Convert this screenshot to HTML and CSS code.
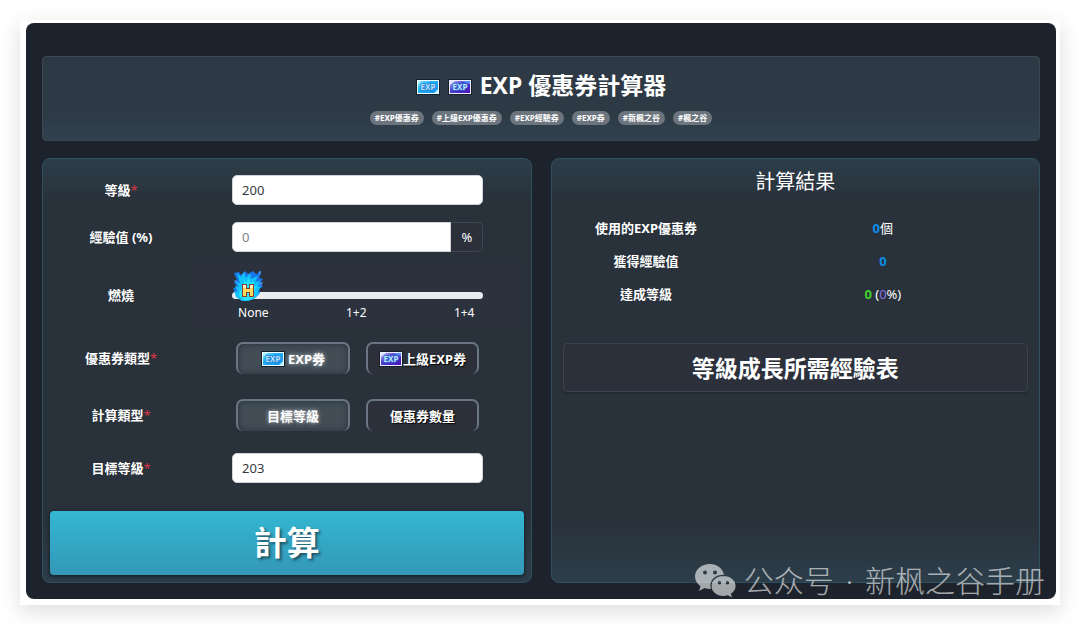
FILE: index.html
```html
<!DOCTYPE html>
<html lang="zh-Hant">
<head>
  <meta charset="UTF-8" />
  <meta name="viewport" content="width=device-width, initial-scale=1.0"/>
  <title>EXP 優惠券計算器</title>
  <link rel="stylesheet" href="styles.css">
</head>
<body>
  <div class="page">
    <header>
      <h1>
        <svg class="coupon" viewBox="0 0 24 16" aria-hidden="true">
          <defs>
            <linearGradient id="blueFill" x1="0" y1="0" x2="1" y2="1">
              <stop offset="0" stop-color="#8be9ff"/>
              <stop offset="0.35" stop-color="#1fb4f8"/>
              <stop offset="1" stop-color="#168be8"/>
            </linearGradient>
          </defs>
          <rect width="24" height="16" fill="#14202b"/>
          <rect x="1" y="1" width="22" height="14" fill="#f4fbff"/>
          <rect x="2" y="2" width="20" height="12" fill="url(#blueFill)"/>
          <path d="M2 2h4l-4 4zM18 14l4-4v4z" fill="#a5f1ff"/>
          <text x="12" y="11" text-anchor="middle" class="coupon-text">EXP</text>
        </svg>
        <svg class="coupon" viewBox="0 0 24 16" aria-hidden="true">
          <defs>
            <linearGradient id="purpleFill" x1="0" y1="0" x2="1" y2="1">
              <stop offset="0" stop-color="#c3b8f5"/>
              <stop offset="0.4" stop-color="#4a42cf"/>
              <stop offset="1" stop-color="#4a12b8"/>
            </linearGradient>
          </defs>
          <rect width="24" height="16" fill="#14202b"/>
          <rect x="1" y="1" width="22" height="14" fill="#f0ecff"/>
          <rect x="2" y="2" width="20" height="12" fill="url(#purpleFill)"/>
          <path d="M2 2h5l-5 4zM19 2h3v3z" fill="#d9e3ff"/>
          <path d="M14 2h8v3l-4-1z" fill="#4f8df0"/>
          <text x="12" y="11" text-anchor="middle" class="coupon-text">EXP</text>
        </svg>
        <span>EXP 優惠券計算器</span>
      </h1>
      <ul class="tags">
        <li>#EXP優惠券</li>
        <li>#上級EXP優惠券</li>
        <li>#EXP經驗券</li>
        <li>#EXP券</li>
        <li>#新楓之谷</li>
        <li>#楓之谷</li>
      </ul>
    </header>

    <main>
      <form class="card form-card">
        <div class="row">
          <label for="level">等級<span class="required">*</span></label>
          <div class="field"><input class="text-input" type="text" id="level" value="200"></div>
        </div>
        <div class="row">
          <label for="exp">經驗值 (%)</label>
          <div class="field input-group">
            <input class="text-input" type="text" id="exp" placeholder="0">
            <span class="unit">%</span>
          </div>
        </div>
        <div class="row row-burning">
          <label for="burning">燃燒</label>
          <div class="field burning">
            <div class="slider">
              <input type="range" id="burning" min="0" max="2" value="0">
              <svg class="flame" viewBox="0 0 32 32" aria-hidden="true">
                <path d="M2 3l5-1 2 3 4-4 3 3 5-3 3 3 5-1-2 5 4 1-3 4 3 4-4 1 1 5-5 5H9l-5-4-3-6 4-1-3-5 3-2z" fill="#1878e8"/>
                <path d="M5 3l4 4 3-5 2 6 4-5 1 6 7-3-3 6 5-1-2 5 3 1-3 4 1 3-5 5-6 2h-6l-6-4-2-6 4 1-3-6 4 1-3-5 4 1z" fill="#12c3fb"/>
                <path d="M12 9l2 4 3-5 1 5 4-2-1 6 4-1-3 6 1 5-6 3h-5l-5-4 1-6 1 1 1-5 2 1z" fill="#25e5ff"/>
                <path d="M2 10l3 1-1 2zM26 2l3-1-1 4zM27 13l4-1-2 4z" fill="#4aa0ff"/>
                <path d="M10 14h5v4h2v-4h5v13h-5v-4h-2v4h-5z" fill="#8a3b33"/>
                <path d="M11 15h3v4h4v-4h3v11h-3v-4h-4v4h-3z" fill="#ffd95a"/>
                <path d="M11 15h3v3h-3zM18 15h3v3h-3z" fill="#fff3bd"/>
              </svg>
            </div>
            <div class="ticks"><span>None</span><span>1+2</span><span>1+4</span></div>
          </div>
        </div>
        <div class="row row-toggle">
          <span class="row-label">優惠券類型<span class="required">*</span></span>
          <div class="field toggles">
            <button type="button" class="toggle active" aria-pressed="true">
              <svg class="coupon" viewBox="0 0 24 16" aria-hidden="true">
                <rect width="24" height="16" fill="#14202b"/>
                <rect x="1" y="1" width="22" height="14" fill="#f4fbff"/>
                <rect x="2" y="2" width="20" height="12" fill="url(#blueFill)"/>
                <path d="M2 2h4l-4 4zM18 14l4-4v4z" fill="#a5f1ff"/>
                <text x="12" y="11" text-anchor="middle" class="coupon-text">EXP</text>
              </svg>&nbsp;EXP券
            </button>
            <button type="button" class="toggle" aria-pressed="false">
              <svg class="coupon" viewBox="0 0 24 16" aria-hidden="true">
                <rect width="24" height="16" fill="#14202b"/>
                <rect x="1" y="1" width="22" height="14" fill="#f0ecff"/>
                <rect x="2" y="2" width="20" height="12" fill="url(#purpleFill)"/>
                <path d="M2 2h5l-5 4zM19 2h3v3z" fill="#d9e3ff"/>
                <path d="M14 2h8v3l-4-1z" fill="#4f8df0"/>
                <text x="12" y="11" text-anchor="middle" class="coupon-text">EXP</text>
              </svg>上級EXP券
            </button>
          </div>
        </div>
        <div class="row row-toggle">
          <span class="row-label">計算類型<span class="required">*</span></span>
          <div class="field toggles">
            <button type="button" class="toggle active" aria-pressed="true">目標等級</button>
            <button type="button" class="toggle" aria-pressed="false">優惠券數量</button>
          </div>
        </div>
        <div class="row row-target">
          <label for="target">目標等級<span class="required">*</span></label>
          <div class="field"><input class="text-input" type="text" id="target" value="203"></div>
        </div>
        <button type="button" class="calculate">計算</button>
      </form>

      <section class="card result-card">
        <h2>計算結果</h2>
        <table>
          <tr>
            <th scope="row">使用的EXP優惠券</th>
            <td><b class="blue">0</b>個</td>
          </tr>
          <tr>
            <th scope="row">獲得經驗值</th>
            <td><b class="blue">0</b></td>
          </tr>
          <tr>
            <th scope="row">達成等級</th>
            <td><b class="green">0</b> (<span class="purple">0</span>%)</td>
          </tr>
        </table>
        <button type="button" class="exp-table">等級成長所需經驗表</button>
      </section>
    </main>

    <div class="watermark" lang="zh-Hans">
      <svg viewBox="0 0 41 34" aria-hidden="true">
        <path fill-rule="evenodd" d="M15 0C6.500 0 0 5.500 0 12.500c0 4 2.200 7.400 5.500 9.700L4 27l5.500-2.900c2 .6 3.700.9 5.500.9h1c-.4-1.200-.6-2.300-.6-3.500 0-6.200 5.600-10.700 12.600-10.700h1C27.700 4.500 22 0 15 0zM10 6.500a2 2 0 1 1 0 4 2 2 0 0 1 0-4zm10 0a2 2 0 1 1 0 4 2 2 0 0 1 0-4z"/>
        <path fill-rule="evenodd" d="M28.500 12C21.600 12 16.500 16.500 16.500 22s5.100 10 12 10c1.500 0 3-.3 4.400-.7L37 33.500l-1.200-3.700c3-2 4.800-4.700 4.800-7.800 0-5.500-5.300-10-12.100-10zM24.500 17a1.700 1.700 0 1 1 0 3.400 1.700 1.700 0 0 1 0-3.400zm8 0a1.700 1.700 0 1 1 0 3.400 1.700 1.700 0 0 1 0-3.400z"/>
      </svg>
      <span>公众号</span>
      <span>·</span>
      <span>新枫之谷手册</span>
    </div>
  </div>
</body>
</html>
```
FILE: styles.css
```css
* {
  box-sizing: border-box;
  margin: 0;
  padding: 0;
}

body {
  margin: 20px;
  padding: 3px 4px 6px 6px;
  background: #fff;
  box-shadow: 0 6px 20px rgba(0, 0, 0, 0.14);
  color: #fff;
  font-family: "Noto Sans", "Noto Sans CJK TC", sans-serif;
  font-size: 13px;
  line-height: 20px;
}

button,
input {
  font: inherit;
}

button {
  color: #fff;
  font-weight: 700;
  cursor: pointer;
}

.page {
  position: relative;
  padding: 33px 16px 16px;
  background: #1d232c;
  border-radius: 8px;
}

header {
  padding: 12px 16px 15px;
  background: linear-gradient(#2d3944 0%, #2d3a45 65%, #30424f 100%);
  border: 1px solid #3b4751;
  border-radius: 4px;
  text-align: center;
}

h1 {
  display: flex;
  justify-content: center;
  align-items: center;
  gap: 8px;
  font-size: 23px;
  line-height: 32px;
}

.coupon {
  width: 24px;
  height: 16px;
}

h1 .coupon {
  margin-top: 4px;
}

.coupon-text {
  font: 700 8px "Noto Sans", sans-serif;
  fill: #b9e4ff;
  stroke: #2a6fc8;
  stroke-width: 1px;
  paint-order: stroke;
  text-shadow: none;
}

.tags {
  display: flex;
  justify-content: center;
  gap: 8px;
  margin-top: 10px;
  list-style: none;
}

.tags li {
  padding: 0 5px;
  background: #6c757d;
  border-radius: 7px;
  font-size: 8px;
  font-weight: 700;
  line-height: 14px;
}

main {
  display: grid;
  grid-template-columns: 1fr 1fr;
  gap: 19px;
  margin-top: 17px;
}

.card {
  padding: 7px;
  background: linear-gradient(#2c3e4a 0, #29313a 42px, #29313a calc(100% - 64px), #2c3e4a 100%);
  border: 1px solid #31505f;
  border-radius: 8px;
}

.form-card {
  padding-top: 16px;
}

.row {
  display: grid;
  grid-template-columns: 3fr 7fr;
  align-items: center;
  margin-bottom: 17px;
  text-align: center;
}

.row label,
.row-label {
  font-weight: 700;
}

.required {
  color: #dc3545;
  font-weight: 400;
}

.field {
  padding: 0 40px;
}

.text-input {
  display: block;
  width: 100%;
  height: 30px;
  padding: 0 9px;
  background: #fff;
  border: 1px solid #ced4da;
  border-radius: 5px;
  color: #343a40;
}

.text-input::placeholder {
  color: #7b838a;
}

.input-group {
  display: flex;
}

.input-group .text-input {
  flex: 1;
  min-width: 0;
  border-radius: 5px 0 0 5px;
}

.unit {
  width: 32px;
  background: #2b303b;
  border: 1px solid #3f4852;
  border-left: 0;
  border-radius: 0 5px 5px 0;
  line-height: 28px;
}

.row-burning {
  margin: -8px 0 14px;
}

.burning {
  padding-top: 26px;
  padding-bottom: 5px;
  background: #2b323d;
  border-radius: 4px;
}

.slider {
  position: relative;
  display: flex;
  align-items: center;
  height: 16px;
}

.slider input {
  appearance: none;
  width: 100%;
  height: 7px;
  background: #e9ecef;
  border-radius: 4px;
}

.slider input::-webkit-slider-thumb {
  appearance: none;
  width: 32px;
  height: 32px;
  background: transparent;
}

/* flame sits on top of the transparent thumb */
.flame {
  position: absolute;
  left: 0;
  bottom: 1px;
  width: 32px;
  height: 32px;
  pointer-events: none;
}

.ticks {
  display: grid;
  grid-template-columns: 1fr auto 1fr;
  padding: 0 9px 0 6px;
  font-size: 12px;
}

.ticks span:first-child {
  text-align: left;
}

.ticks span:last-child {
  text-align: right;
}

.toggles {
  display: grid;
  grid-template-columns: 1fr 1fr;
  gap: 16px;
  padding: 0 44px;
}

.row-toggle {
  margin-bottom: 25px;
}

.row-target {
  margin-top: -3px;
  margin-bottom: 28px;
}

.toggle {
  display: flex;
  justify-content: center;
  align-items: center;
  height: 32px;
  background: #2b303b;
  border: 2px solid #6b7684;
  border-bottom: 0;
  border-radius: 7px;
  text-shadow: 1px 1px 1px #000;
  white-space: nowrap;
}

.toggle.active {
  background: #424d56;
  box-shadow: inset 0 0 6px #27313a;
  text-shadow: 0 0 4px rgba(255, 255, 255, 0.7);
}

.calculate {
  display: block;
  width: 100%;
  height: 64px;
  background: linear-gradient(#33b7d2, #3497b8);
  border: 0;
  border-radius: 4px;
  box-shadow: 0 1px 3px 1px #182229;
  font-size: 33px;
  text-shadow: 2px 2px 3px rgba(0, 0, 0, 0.5);
}

h2 {
  padding: 4px 0 2px;
  font-size: 20px;
  font-weight: 400;
  line-height: 24px;
  text-align: center;
}

table {
  width: 100%;
  margin-top: 15px;
  border-collapse: collapse;
  table-layout: fixed;
}

th,
td {
  height: 33px;
  text-align: center;
}

th {
  width: 37%;
}

.blue {
  color: #0d8ee8;
}

.green {
  color: #41cf2c;
}

.purple {
  color: #8672e8;
}

.exp-table {
  display: block;
  width: calc(100% - 8px);
  height: 49px;
  margin: 33px 4px 0;
  background: #2b303b;
  border: 1px solid #3b444e;
  border-radius: 4px;
  box-shadow: 0 1px 2px #1f2830;
  font-size: 23px;
}

.watermark {
  position: absolute;
  right: 11px;
  bottom: 0;
  display: flex;
  align-items: center;
  gap: 12px;
  color: #fff;
  font-family: "Noto Sans", "Noto Sans CJK SC", sans-serif;
  font-size: 30px;
  font-weight: 300;
  line-height: 36px;
  opacity: 0.6;
  white-space: nowrap;
  pointer-events: none;
}

.watermark svg {
  width: 41px;
  height: 34px;
  margin-right: -4px;
  fill: #fff;
}
```
